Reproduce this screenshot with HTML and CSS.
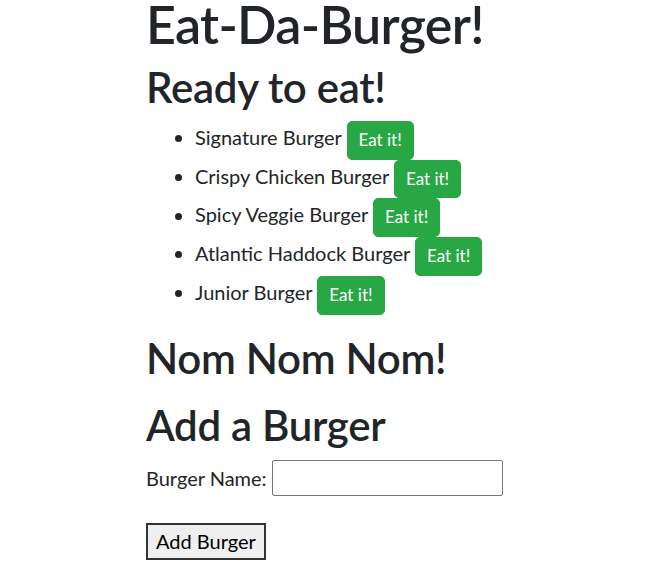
FILE: index.html
```html
<!DOCTYPE html>
<html>
<head>
<meta charset="utf-8">
<title>Eat-Da-Burger!</title>
<link rel="stylesheet" href="styles.css">
</head>
<body>
<div class="container">
  <h1 class="title">Eat-Da-Burger!</h1>
  <h2 class="section ready">Ready to eat!</h2>
  <ul class="burgers">
    <li>Signature Burger <button class="btn-eat">Eat it!</button></li>
    <li>Crispy Chicken Burger <button class="btn-eat">Eat it!</button></li>
    <li>Spicy Veggie Burger <button class="btn-eat">Eat it!</button></li>
    <li>Atlantic Haddock Burger <button class="btn-eat">Eat it!</button></li>
    <li>Junior Burger <button class="btn-eat">Eat it!</button></li>
  </ul>
  <h2 class="section nom">Nom Nom Nom!</h2>
  <h2 class="section add">Add a Burger</h2>
  <form class="add-form">
    <div class="field">
      <label for="bn">Burger Name:</label>
      <input id="bn" type="text" class="name-input">
    </div>
    <button type="button" class="btn-add">Add Burger</button>
  </form>
</div>
</body>
</html>
```
FILE: styles.css
```css
html, body {
  margin: 0;
  padding: 0;
  background: #fff;
}
body {
  font-family: Lato, "Noto Sans", sans-serif;
  font-size: 20px;
  line-height: 1.5;
  color: #212529;
}
.container {
  padding-left: 146px;
}
.title {
  font-size: 52px;
  font-weight: 600;
  letter-spacing: -0.7px;
  line-height: 0.95;
  margin: 0 0 13px 0;
}
.section {
  font-size: 42px;
  font-weight: 600;
  letter-spacing: -0.3px;
  line-height: 1.2;
  margin: 0 0 8px 0;
}
.burgers {
  margin: 0 0 18px 0;
  padding-left: 49px;
}
.burgers li {
  line-height: 24px;
}
.btn-eat {
  font-family: inherit;
  font-size: 17px;
  line-height: 26.75px;
  color: #fff;
  background: #28a745;
  border: 1px solid #28a745;
  border-radius: 5px;
  padding: 5px 11px;
  vertical-align: middle;
}
.nom {
  margin-bottom: 17px;
}
.add {
  margin-bottom: 10px;
}
.field {
  display: flex;
  align-items: center;
  gap: 5px;
  margin-bottom: 27px;
}
.name-input {
  box-sizing: border-box;
  width: 231px;
  height: 36px;
  border: 1px solid #767676;
  border-radius: 2px;
  padding: 1px 2px;
  margin: 0;
}
.btn-add {
  font-family: inherit;
  font-size: 20px;
  line-height: 29px;
  color: #000;
  background: #efefef;
  border: 2px solid #333;
  padding: 2px 8px;
  margin: 0;
}
```
